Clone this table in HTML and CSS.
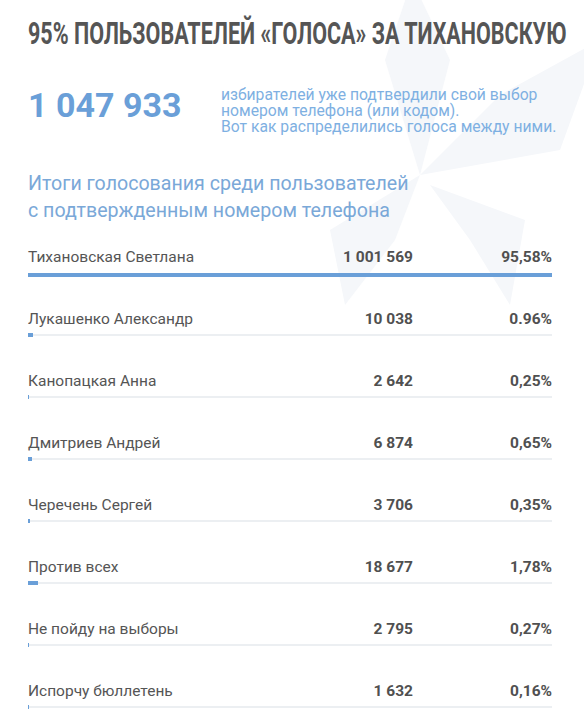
FILE: index.html
```html
<!DOCTYPE html>
<html lang="ru">
<head>
<meta charset="utf-8">
<link rel="stylesheet" href="styles.css">
</head>
<body>
<div class="page">
  <svg class="watermark" width="584" height="360" viewBox="0 0 584 360" aria-hidden="true">
    <g fill="#f5f7fa">
      <polygon points="420,175 385,60 412,-20 450,60"/>
      <polygon points="420,175 500,95 600,40 560,150"/>
      <polygon points="420,175 330,230 345,305 395,240"/>
      <polygon points="430,185 470,240 510,305 525,220"/>
    </g>
  </svg>
  <h1 class="title"><span class="title-text">95% ПОЛЬЗОВАТЕЛЕЙ «ГОЛОСА» ЗА ТИХАНОВСКУЮ</span></h1>
  <div class="summary">
    <div class="big-number">1 047 933</div>
    <p class="summary-text">избирателей уже подтвердили свой выбор<br>номером телефона (или кодом).<br>Вот как распределились голоса между ними.</p>
  </div>
  <h2 class="subtitle">Итоги голосования среди пользователей<br>с подтвержденным номером телефона</h2>
  <div class="results">
    <div class="row row-first">
      <div class="line"><span class="name">Тихановская Светлана</span><span class="count">1 001 569</span><span class="pct">95,58%</span></div>
      <div class="bar"><span class="fill" style="width:100%"></span><span class="rest"></span></div>
    </div>
    <div class="row">
      <div class="line"><span class="name">Лукашенко Александр</span><span class="count">10 038</span><span class="pct">0.96%</span></div>
      <div class="bar"><span class="fill" style="width:1.0%"></span><span class="rest"></span></div>
    </div>
    <div class="row">
      <div class="line"><span class="name">Канопацкая Анна</span><span class="count">2 642</span><span class="pct">0,25%</span></div>
      <div class="bar"><span class="fill" style="width:0.26%"></span><span class="rest"></span></div>
    </div>
    <div class="row">
      <div class="line"><span class="name">Дмитриев Андрей</span><span class="count">6 874</span><span class="pct">0,65%</span></div>
      <div class="bar"><span class="fill" style="width:0.68%"></span><span class="rest"></span></div>
    </div>
    <div class="row">
      <div class="line"><span class="name">Черечень Сергей</span><span class="count">3 706</span><span class="pct">0,35%</span></div>
      <div class="bar"><span class="fill" style="width:0.37%"></span><span class="rest"></span></div>
    </div>
    <div class="row">
      <div class="line"><span class="name">Против всех</span><span class="count">18 677</span><span class="pct">1,78%</span></div>
      <div class="bar"><span class="fill" style="width:1.86%"></span><span class="rest"></span></div>
    </div>
    <div class="row">
      <div class="line"><span class="name">Не пойду на выборы</span><span class="count">2 795</span><span class="pct">0,27%</span></div>
      <div class="bar"><span class="fill" style="width:0.28%"></span><span class="rest"></span></div>
    </div>
    <div class="row">
      <div class="line"><span class="name">Испорчу бюллетень</span><span class="count">1 632</span><span class="pct">0,16%</span></div>
      <div class="bar"><span class="fill" style="width:0.17%"></span><span class="rest"></span></div>
    </div>
  </div>
</div>
</body>
</html>
```

FILE: styles.css
```css
html, body {
  margin: 0;
  padding: 0;
  background: #ffffff;
}
body {
  font-family: Roboto, "Noto Sans", "Liberation Sans", sans-serif;
  color: #555555;
  width: 584px;
  height: 720px;
  overflow: hidden;
}
.page {
  position: relative;
  padding: 16px 32px 0 28px;
}
.watermark {
  position: absolute;
  left: 0;
  top: 0;
  z-index: 0;
}
.title, .summary, .subtitle, .results {
  position: relative;
  z-index: 1;
}
.title {
  margin: 0;
  height: 36px;
  font-size: 31px;
  line-height: 36px;
  font-weight: 700;
  color: #555555;
  white-space: nowrap;
}
.title-text {
  display: inline-block;
  transform: scaleX(0.694);
  transform-origin: left center;
}
.summary {
  display: flex;
  align-items: flex-start;
  margin-top: 33px;
}
.big-number {
  width: 193px;
  flex: none;
  font-size: 34px;
  line-height: 40px;
  font-weight: 700;
  color: #6a9fd8;
  white-space: nowrap;
}
.summary-text {
  margin: 2px 0 0 0;
  font-size: 15.7px;
  line-height: 16px;
  color: #7eb0e2;
  white-space: nowrap;
}
.subtitle {
  margin: 35px 0 0 0;
  font-size: 19.6px;
  line-height: 27px;
  font-weight: 400;
  color: #7aa8d8;
}
.results {
  margin-top: 23px;
}
.row {
  padding-bottom: 34px;
}
.row-first {
  padding-bottom: 32px;
}
.line {
  display: grid;
  grid-template-columns: 1fr 120px 139px;
  height: 20px;
  line-height: 20px;
  font-size: 15.5px;
}
.name {
  color: #555555;
}
.count, .pct {
  text-align: right;
  font-weight: 700;
  color: #505050;
}
.bar {
  display: flex;
  align-items: center;
  height: 4px;
  margin-top: 4px;
}
.row-first .bar {
  margin-top: 6px;
}
.fill {
  height: 4px;
  min-width: 1px;
  background: #6a9fd8;
}
.rest {
  flex: 1;
  height: 2px;
  background: #eceff2;
}
```
